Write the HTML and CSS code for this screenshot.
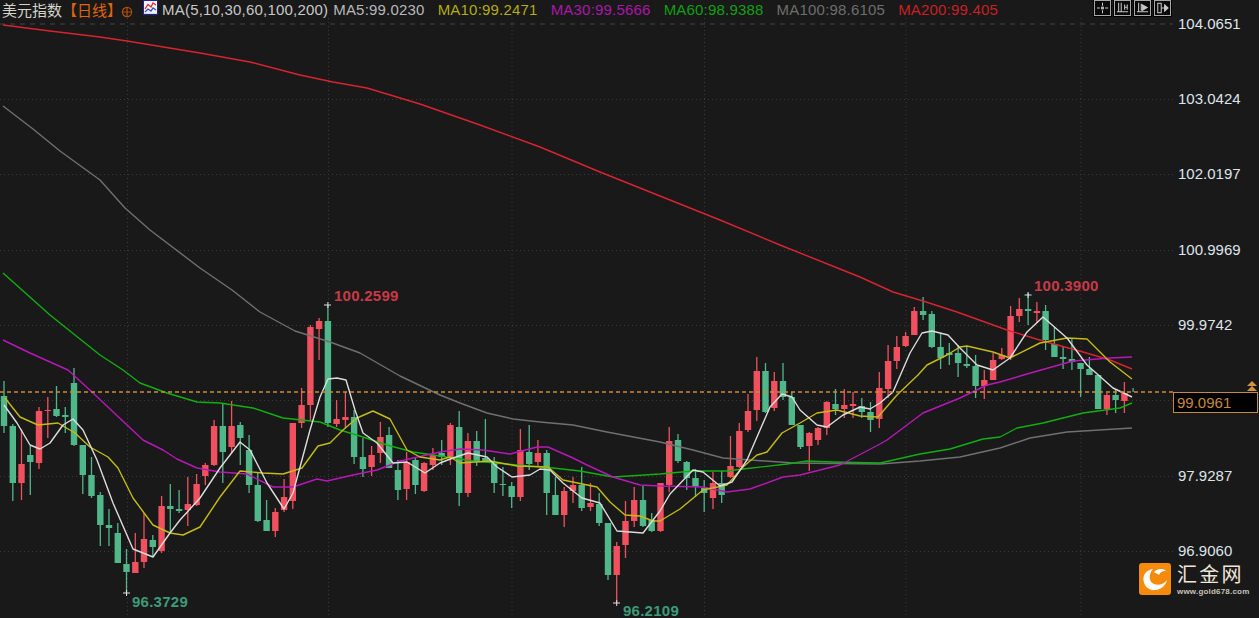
FILE: index.html
```html
<!DOCTYPE html>
<html lang="zh">
<head>
<meta charset="utf-8">
<title>美元指数 日线</title>
<link rel="stylesheet" href="styles.css">
</head>
<body>
<div class="terminal">
  <div class="main">
    <header class="legend">
      <span class="symbol">美元指数</span>
      <span class="period">【日线】</span>
      <svg class="target" viewBox="0 0 12 12"><circle cx="6" cy="6" r="4.6"/><path d="M1 6H11M6 1V11"/></svg>
      <svg class="ma-icon" viewBox="0 0 15 16"><rect x=".5" y=".5" width="14" height="14"/><path class="ma-blue-base" d="M1 14.5H14.5"/><path class="ma-red" d="M2 9L5 4.5L8 7L10 3L13 5"/><path class="ma-blue" d="M2 12L5 9L8 11L10 8L13 10"/></svg>
      <span class="ma-name">MA(5,10,30,60,100,200)</span>
      <span class="ma ma5">MA5:99.0230</span>
      <span class="ma ma10">MA10:99.2471</span>
      <span class="ma ma30">MA30:99.5666</span>
      <span class="ma ma60">MA60:98.9388</span>
      <span class="ma ma100">MA100:98.6105</span>
      <span class="ma ma200">MA200:99.405</span>
      <nav class="tools">
        <button class="tool"><svg viewBox="0 0 15 14"><path d="M7.5 1V4.5M7.5 9.500V13M1 7H4.500M10.500 7H14"/><rect x="6.500" y="6" width="2" height="2"/></svg></button>
        <button class="tool"><svg viewBox="0 0 15 14"><path d="M3 1V11M1 11.500H14M6 1V11M10 3V9M10 6H13M13 3V9"/></svg></button>
        <button class="tool"><svg viewBox="0 0 15 14"><path d="M3 1V11M1 11.500H14M6 2V10"/><polygon points="7,3 13,6.500 7,10"/></svg></button>
        <button class="tool"><svg viewBox="0 0 15 14"><rect x="2" y="1.500" width="4" height="11"/><path d="M6 7H12"/><polygon points="10,3.500 14,7 10,10.500"/></svg></button>
      </nav>
    </header>
    <svg class="plot" viewBox="0 18 1173 600">
      <path class="grid-top" d="M0 24H1173"/>
      <path class="grid" d="M0 99.500H1173M0 174.500H1173M0 250.500H1173M0 325.500H1173M0 400.500H1173M0 476.500H1173M0 551.500H1173M127.500 18V618M328.500 18V618M512 18V618M704.500 18V618M906 18V618M1081 18V618"/>
      <path class="wick up" d="M4 381V433M12.800 424V501M30.300 446V495M56.500 386V417M65.300 407V433M74 368V446M82.800 445V494M91.500 457V498M100.300 492V546M109 509V546M117.800 523V563M126.500 549V593M152.800 535V556M170.300 484V533M179.100 490V513M222.800 404V483M240.300 422V465M249.100 435V493M257.800 473V522M266.600 500V531M327.900 305V427M354.100 410V464M362.900 438V477M389.100 427V468M397.900 460V500M415.400 457V494M441.700 440V465M459.200 411V506M476.700 431V466M485.400 419V462M494.200 457V493M502.900 467V496M511.700 482V508M529.200 425V470M546.700 450V515M555.400 477V515M581.700 467V511M599.200 493V526M608 523V580M643 486V527M651.700 513V532M678 434V463M686.700 461V490M695.500 469V497M704.200 480V512M721.700 471V503M765.500 363V413M783 363V400M791.800 392V425M800.500 425V449M835.500 389V415M861.800 398V418M870.500 402V432M923.100 297V320M931.800 311V348M940.600 333V369M949.300 343V365M958.100 345V377M966.800 347V368M975.600 355V398M1028.100 293V325M1045.600 305V350M1054.400 327V357M1063.100 347V369M1071.900 339V370M1080.600 363V397M1089.400 357V375M1098.100 375V409M1115.600 389V413M1133.100 388V392"/>
      <path class="body up" d="M4 396V426M12.800 426V483M30.300 455V462M56.500 409V416M65.300 415V417M74 383V445M82.800 445V475M91.500 475V496M100.300 495V525M109 525V528M117.800 533V563M126.500 564V572M152.800 540V547M170.300 506V509M179.100 509V511M222.800 426V452M240.300 425V438M249.100 450V485M257.800 485V521M266.600 520V531M327.900 321V423M354.100 417V457M362.900 457V469M389.100 435V468M397.900 470V490M415.400 460V485M441.700 453V457M459.200 427V493M476.700 441V461M485.400 458V461M494.200 463V483M502.900 484V485M511.700 486V497M529.200 452V464M546.700 453V493M555.400 495V515M581.700 485V508M599.200 504V523M608 523V575M643 500V526M651.700 520V531M678 440V461M686.700 462V478M695.500 478V487M704.200 488V493M721.700 483V495M765.500 371V412M783 381V397M791.800 397V425M800.500 425V447M835.500 404V409M861.800 406V412M870.500 412V420M923.100 311V315M931.800 314V347M940.600 347V358M949.300 353V355M958.100 353V363M966.800 364V366M975.600 366V386M1028.100 309V311M1045.600 311V340M1054.400 344V357M1063.100 357V359M1071.900 359V362M1080.600 363V369M1089.400 369V375M1098.100 375V409M1115.600 395V400"/>
      <path class="wick down" d="M21.500 429V500M39 407V469M47.800 397V438M135.300 533V573M144 513V568M161.600 496V553M187.800 477V526M196.600 474V506M205.300 463V485M214.100 420V466M231.600 401V453M275.300 508V537M284.100 479V512M292.800 423V509M301.600 388V428M310.400 325V421M319.100 318V360M336.600 400V427M345.400 392V428M371.600 446V476M380.400 422V463M406.600 452V500M424.100 462V492M432.900 448V470M450.400 423V465M467.900 433V497M520.400 429V501M537.900 440V467M564.200 487V527M573 477V503M590.500 483V511M616.700 542V603M625.500 501V558M634.200 487V527M660.500 483V532M669.200 427V492M713 472V509M730.500 436V478M739.300 423V468M748 394V432M756.800 357V421M774.300 372V411M809.300 432V471M818 427V445M826.800 401V435M844.300 389V418M853 392V418M879.300 372V428M888.100 345V398M896.800 336V369M905.600 332V347M914.300 307V335M984.300 370V399M993.100 353V380M1001.800 348V360M1010.600 306V360M1019.300 298V322M1036.900 302V323M1106.900 393V415M1124.400 382V413"/>
      <path class="body down" d="M21.500 464V483M39 411V463M47.800 410V411M135.300 562V573M144 539V562M161.600 506V551M187.800 504V510M196.600 484V505M205.300 465V476M214.100 426V465M231.600 426V447M275.300 512V531M284.100 497V510M292.800 423V501M301.600 405V423M310.400 327V405M319.100 321V329M336.600 419V424M345.400 417V420M371.600 455V467M380.400 437V453M406.600 462V489M424.100 463V491M432.900 455V465M450.400 425V457M467.900 441V493M520.400 450V497M537.900 453V462M564.200 491V515M573 485V491M590.500 503V507M616.700 546V575M625.500 521V545M634.200 500V521M660.500 483V531M669.200 441V485M713 483V498M730.500 466V477M739.300 431V467M748 411V430M756.800 371V410M774.300 381V408M809.300 433V446M818 428V440M826.800 402V428M844.300 405V409M853 404V406M879.300 388V419M888.100 361V389M896.800 347V361M905.600 336V346M914.300 311V335M984.300 380V386M993.100 360V380M1001.800 355V359M1010.600 316V357M1019.300 309V316M1036.900 311V313M1106.900 395V409M1124.400 393V401"/>
      <polyline class="line ma200-line" points="3,25 50,31 100,37 127,41 200,53 250,62 300,75 333,82 367,88 420,104 480,125 540,147 600,172 660,196 720,220 780,245 840,269 860,277 893,292 923,301 957,312 1007,330 1043,341 1083,352 1110,360 1132,369"/>
      <polyline class="line ma100-line" points="3,106 33,129 60,151 100,180 125,208 150,230 200,268 232,290 260,312 295,331 330,342 360,353 400,376 440,395 460,403 487,413 513,419 540,422 573,425 607,432 660,442 693,450 723,458 793,463 880,464 920,461 960,457 1000,448 1030,438 1067,432 1132,428"/>
      <polyline class="line ma60-line" points="3,273 50,315 100,355 123,370 140,383 167,393 197,402 220,403 253,408 283,418 320,422 340,430 363,437 387,445 413,452 440,456 473,461 507,464 553,468 580,471 613,477 660,474 693,471 727,471 743,469 787,464 807,461 833,462 880,463 920,454 950,449 983,439 1000,437 1017,428 1043,423 1083,413 1120,408 1132,403"/>
      <polyline class="line ma30-line" points="3,340 30,353 68,370 93,393 127,425 143,440 163,450 177,459 197,468 220,472 247,474 273,487 293,487 317,479 327,481 353,475 377,470 400,461 440,452 460,449 483,450 510,454 537,447 548,447 573,458 587,465 613,477 640,485 660,486 703,487 727,492 750,489 783,477 800,475 840,465 880,444 887,440 923,413 960,398 987,385 1000,382 1027,374 1073,361 1110,358 1132,357"/>
      <polyline class="line ma10-line" points="5,398 20,417 38,425 58,423 75,433 90,447 108,457 118,468 133,498 153,525 170,533 183,535 200,527 220,497 240,471 263,473 283,474 302,468 318,446 330,443 343,430 357,418 373,411 390,419 407,450 420,457 440,460 450,457 460,463 490,461 517,466 548,467 563,480 597,487 610,502 625,515 640,516 653,521 660,521 680,509 703,490 727,485 743,467 757,455 767,452 782,433 800,423 817,413 837,410 860,416 878,417 897,395 918,375 927,365 947,355 960,347 967,346 993,352 1010,358 1040,343 1067,338 1087,339 1110,362 1132,379"/>
      <polyline class="line ma5-line" points="4,405 17,423 30,445 40,449 50,443 63,425 73,419 83,430 97,460 113,503 133,549 153,557 170,533 180,520 200,498 220,468 240,442 250,450 267,483 284,509 293,493 310,430 320,397 328,379 337,378 346,380 355,410 363,433 377,443 393,463 407,462 425,473 440,463 453,458 468,453 487,457 497,467 512,477 530,475 540,469 550,470 563,483 582,498 600,503 617,531 643,533 660,511 670,494 693,470 703,472 720,486 732,482 747,460 770,407 782,394 792,397 800,410 817,425 827,427 843,415 860,407 870,409 880,403 893,392 910,353 922,333 932,331 948,335 960,348 977,365 993,370 1010,358 1027,332 1043,317 1067,338 1087,365 1113,388 1132,397"/>
      <path class="last-price" d="M0 392H1173"/>
      <path class="extreme-mark" d="M324 305H331M327.900 302V308M123 593H130M126.500 590V596M613 603H620M616.700 600V606M1024.600 295H1031.600M1028.100 292V298"/>
      <text class="extreme high" x="334" y="301">100.2599</text>
      <text class="extreme high" x="1034" y="291">100.3900</text>
      <text class="extreme low" x="132" y="607">96.3729</text>
      <text class="extreme low" x="623" y="616">96.2109</text>
    </svg>
  </div>
  <aside class="axis">
    <span class="tick">104.0651</span>
    <span class="tick">103.0424</span>
    <span class="tick">102.0197</span>
    <span class="tick">100.9969</span>
    <span class="tick">99.9742</span>
    <span class="tick tick-hidden">98.9514</span>
    <span class="tick">97.9287</span>
    <span class="tick">96.9060</span>
  </aside>
  <svg class="price-arrows" viewBox="0 0 10 10"><polygon points="5,0 10,5 0,5"/><polygon points="5,5 10,10 0,10"/></svg>
  <div class="price-box">99.0961</div>
  <div class="brand">
    <svg class="brand-mark" viewBox="0 0 32 32"><rect width="32" height="32" rx="3"/><path class="swirl" d="M14 6C7 7 4 12 4.500 17C5 24 11 28 17 27C23 26 27 22 28 17C25 21 20 23 15 21C10 19 9 12 14 6Z"/><path class="swirl" d="M15 9C18 5.500 24 5 27 8C24 7.500 21 9 20 12C18 10.500 16.500 10 15 9Z"/></svg>
    <div class="brand-text">
      <span class="brand-name">汇金网</span>
      <span class="brand-url">www.gold678.com</span>
    </div>
  </div>
</div>
</body>
</html>
```

FILE: styles.css
```css
html, body {
  margin: 0;
  padding: 0;
  height: 100%;
  overflow: hidden;
  background: #191919;
}

.terminal {
  position: relative;
  display: flex;
  width: 1259px;
  height: 618px;
  overflow: hidden;
  background: #191919;
  font-family: "Liberation Sans", "Noto Sans CJK SC", sans-serif;
}

.main {
  display: flex;
  flex-direction: column;
  width: 1173px;
  flex: none;
}

.legend {
  display: flex;
  align-items: flex-start;
  height: 18px;
  padding-left: 2px;
  box-sizing: border-box;
  font-size: 15px;
  line-height: 19px;
  white-space: nowrap;
}

.symbol { color: #d6d2cc; font-family: "Noto Sans CJK SC", sans-serif; font-size: 15px; line-height: 22px; margin-top: -1px; }
.period { color: #e0640e; font-family: "Noto Sans CJK SC", sans-serif; font-size: 15px; line-height: 22px; margin-top: -1px; }

.target {
  width: 12px;
  height: 12px;
  margin: 6px 6px 0 -1px;
  fill: none;
  stroke: #b5500f;
  stroke-width: 1.2;
}

.ma-icon {
  width: 15px;
  height: 16px;
  margin-left: 4px;
  margin-right: 4px;
}
.ma-icon rect { fill: #f2f2f8; stroke: #24248c; }
.ma-icon path { fill: none; stroke-width: 1.300; }
.ma-red { stroke: #e02c2c; }
.ma-blue { stroke: #3050d0; }
.ma-blue-base { stroke: #24248c; }

.ma-name { color: #c8c8c8; letter-spacing: .2px; margin-right: 5px; }
.ma { margin-right: 13px; letter-spacing: .2px; }
.ma5 { color: #b8b8b8; }
.ma10 { color: #b4ac12; }
.ma30 { color: #a818a8; }
.ma60 { color: #12a012; }
.ma100 { color: #6e6e6e; }
.ma200 { color: #c82024; }

.tools {
  display: flex;
  gap: 3px;
  position: absolute;
  left: 1094px;
  top: 0;
}

.tool {
  width: 17px;
  height: 16px;
  padding: 1px;
  border: 1px solid #a8a8a8;
  background: #0a0a0a;
  box-shadow: 0 0 0 1px #000;
  display: flex;
}
.tool svg { width: 100%; height: 100%; fill: #c8c8c8; stroke: #c8c8c8; stroke-width: 1.200; }
.tool svg path { fill: none; }
.tool svg rect { fill: none; }

.plot {
  display: block;
  width: 1173px;
  height: 600px;
  flex: none;
}

.grid { fill: none; stroke: #3c3c3c; stroke-width: 1; stroke-dasharray: 1 3; }
.grid-top { fill: none; stroke: #444; stroke-width: 1; stroke-dasharray: 5 5; }

.wick { fill: none; stroke-width: 1.300; }
.body { fill: none; stroke-width: 6.400; }
.up { stroke: #50b78b; }
.down { stroke: #f1505f; }

.line { fill: none; stroke-width: 1.400; stroke-linejoin: round; }
.ma5-line { stroke: #dcdcdc; }
.ma10-line { stroke: #c4bc14; }
.ma30-line { stroke: #b818b8; }
.ma60-line { stroke: #10b010; }
.ma100-line { stroke: #707070; }
.ma200-line { stroke: #d82430; }

.last-price { fill: none; stroke: #c98c40; stroke-width: 1.400; stroke-dasharray: 4 3; }
.extreme-mark { fill: none; stroke: #e0e0e0; stroke-width: 1; }

.extreme { font-size: 15px; font-weight: 700; letter-spacing: .25px; font-family: "Liberation Sans", sans-serif; }
.high { fill: #c83a48; }
.low { fill: #3d9b7c; }

.axis {
  display: flex;
  flex-direction: column;
  gap: 55.400px;
  padding: 13.600px 0 0 5px;
  width: 86px;
  box-sizing: border-box;
}
.tick {
  height: 20px;
  line-height: 20px;
  font-size: 15px;
  color: #dde4ea;
}
.tick-hidden { visibility: hidden; }

.price-arrows {
  position: absolute;
  left: 1247px;
  top: 381px;
  width: 10px;
  height: 10px;
  fill: #d8943c;
}

.price-box {
  position: absolute;
  left: 1173px;
  top: 392px;
  width: 85px;
  height: 21px;
  box-sizing: border-box;
  padding-left: 3px;
  border: 1px solid #c48a3e;
  background: #000;
  color: #c48a3e;
  font-size: 15px;
  line-height: 20px;
}

.brand {
  position: absolute;
  left: 1139px;
  top: 563px;
  display: flex;
  gap: 6px;
}
.brand-mark { width: 32px; height: 32px; flex: none; }
.brand-mark rect { fill: #f58a0c; }
.swirl { fill: #fff; }

.brand-text { display: flex; flex-direction: column; }
.brand-name {
  color: #efe6da;
  font-family: "Noto Sans CJK SC", sans-serif;
  font-size: 20px;
  line-height: 24px;
  letter-spacing: 2.300px;
  margin-top: -1px;
}
.brand-url {
  color: #c8c2b8;
  font-size: 8px;
  font-weight: 700;
  line-height: 9px;
  letter-spacing: .2px;
  margin-top: 1px;
}
```
